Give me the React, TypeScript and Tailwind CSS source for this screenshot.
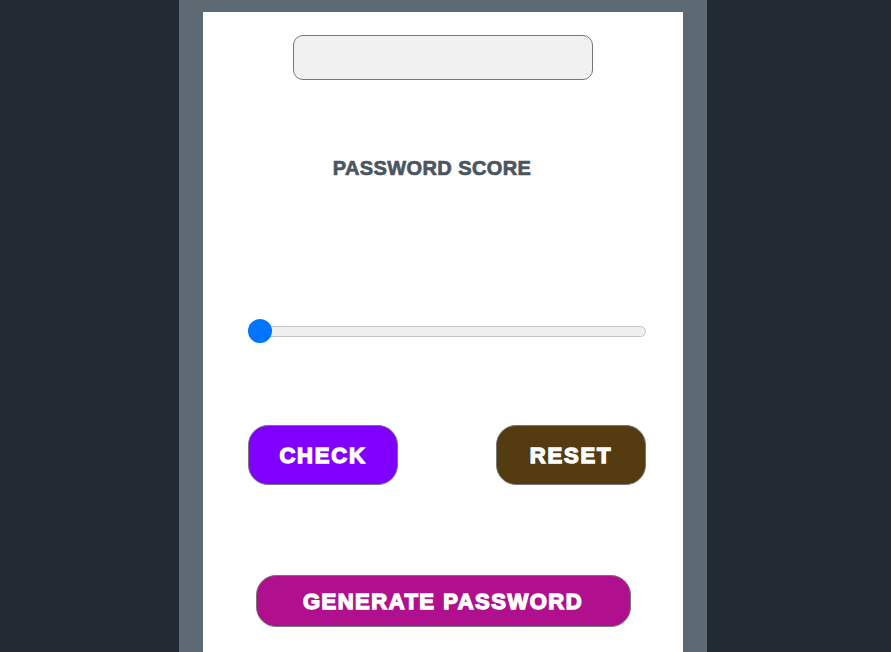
const App = () => {
    return (
        <div className="flex min-h-screen justify-center bg-[#222b33] pr-[5px]" style={{ fontFamily: '"Liberation Sans", Arial, sans-serif' }}>
            <div className="w-[528px] bg-[#5e6a73] px-6 pt-3">
                <div className="flex min-h-[700px] flex-col items-center bg-white">
                    {/* Password field */}
                    <input
                        type="text"
                        className="mt-[23px] h-[45px] w-[300px] rounded-[10px] border border-[#777] bg-[#f1f1f1] px-3 outline-none"
                    />

                    <h2 className="mt-[76px] w-full pr-[22px] text-center text-[20px] leading-6 font-bold tracking-[0.4px] text-[#4a5560] [-webkit-text-stroke:0.7px_#4a5560]">
                        PASSWORD SCORE
                    </h2>

                    {/* Length slider */}
                    <div className="mt-[139px] w-full pl-[45px] pr-[37px]">
                        <div className="relative flex h-6 items-center">
                            <div className="ml-[7px] h-[11px] flex-1 rounded-full border border-[#c4c4c4] bg-[#efefef]" />
                            <div className="absolute left-0 top-0 h-6 w-6 rounded-full bg-[#0075ff]" />
                        </div>
                    </div>

                    <div className="mt-[82px] flex w-full justify-between pl-[45px] pr-[37px]">
                        <button className="h-[60px] w-[150px] rounded-[20px] border border-[#777] bg-[#8000ff] text-[22px] font-bold tracking-[1.8px] text-white [-webkit-text-stroke:1.4px_white]">
                            CHECK
                        </button>
                        <button className="h-[60px] w-[150px] rounded-[20px] border border-[#777] bg-[#553b10] text-[22px] font-bold tracking-[1.8px] text-white [-webkit-text-stroke:1.4px_white]">
                            RESET
                        </button>
                    </div>

                    <button className="mt-[90px] h-[52px] w-[375px] rounded-[20px] border border-[#777] bg-[#b0108e] text-[22px] font-bold tracking-[1.5px] text-white [-webkit-text-stroke:1.4px_white]">
                        GENERATE PASSWORD
                    </button>
                </div>
            </div>
        </div>
    );
};

export default App;
